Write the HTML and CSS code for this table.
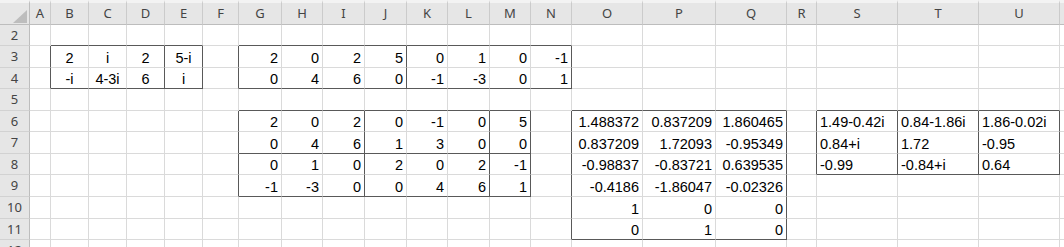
FILE: index.html
```html
<!DOCTYPE html>
<html>
<head>
<meta charset="utf-8">
<link rel="stylesheet" href="styles.css">
</head>
<body>
<div class="sheet">
  <!-- header row -->
  <div class="corner"><svg class="tri" width="14" height="13" viewBox="0 0 14 13"><polygon points="14,0 14,13 0,13" fill="#bdbdbd"/></svg></div>
  <div class="h">A</div><div class="h">B</div><div class="h">C</div><div class="h">D</div><div class="h">E</div><div class="h">F</div><div class="h">G</div><div class="h">H</div><div class="h">I</div><div class="h">J</div><div class="h">K</div><div class="h">L</div><div class="h">M</div><div class="h">N</div><div class="h">O</div><div class="h">P</div><div class="h">Q</div><div class="h">R</div><div class="h">S</div><div class="h">T</div><div class="h">U</div><div class="h"></div>

  <!-- row 2 -->
  <div class="rh">2</div>
  <div></div><div class="B"></div><div class="B"></div><div class="B"></div><div class="B"></div><div></div>
  <div class="B"></div><div class="B"></div><div class="B"></div><div class="B"></div><div class="B"></div><div class="B"></div><div class="B"></div><div class="B"></div>
  <div></div><div></div><div></div><div></div><div></div><div></div><div></div><div></div>

  <!-- row 3 -->
  <div class="rh">3</div>
  <div class="R"></div><div class="c">2</div><div class="c">i</div><div class="c R">2</div><div class="c R">5-i</div><div class="R"></div>
  <div class="r">2</div><div class="r">0</div><div class="r">2</div><div class="r R">5</div><div class="r">0</div><div class="r">1</div><div class="r">0</div><div class="r R">-1</div>
  <div></div><div></div><div></div><div></div><div></div><div></div><div></div><div></div>

  <!-- row 4 -->
  <div class="rh">4</div>
  <div class="R"></div><div class="c B">-i</div><div class="c B">4-3i</div><div class="c R B">6</div><div class="c R B">i</div><div class="R"></div>
  <div class="r B">0</div><div class="r B">4</div><div class="r B">6</div><div class="r R B">0</div><div class="r B">-1</div><div class="r B">-3</div><div class="r B">0</div><div class="r R B">1</div>
  <div></div><div></div><div></div><div></div><div></div><div></div><div></div><div></div>

  <!-- row 5 -->
  <div class="rh">5</div>
  <div></div><div></div><div></div><div></div><div></div><div></div>
  <div class="B"></div><div class="B"></div><div class="B"></div><div class="B"></div><div class="B"></div><div class="B"></div><div class="B"></div><div></div>
  <div class="B"></div><div class="B"></div><div class="B"></div><div></div><div class="B"></div><div class="B"></div><div class="B"></div><div></div>

  <!-- row 6 -->
  <div class="rh">6</div>
  <div></div><div></div><div></div><div></div><div></div><div class="R"></div>
  <div class="r">2</div><div class="r">0</div><div class="r R">2</div><div class="r">0</div><div class="r">-1</div><div class="r R">0</div><div class="r R">5</div><div class="R"></div>
  <div class="r">1.488372</div><div class="r">0.837209</div><div class="r R">1.860465</div><div class="R"></div><div class="l R">1.49-0.42i</div><div class="l R">0.84-1.86i</div><div class="l R">1.86-0.02i</div><div></div>

  <!-- row 7 -->
  <div class="rh">7</div>
  <div></div><div></div><div></div><div></div><div></div><div class="R"></div>
  <div class="r B">0</div><div class="r B">4</div><div class="r R B">6</div><div class="r B">1</div><div class="r B">3</div><div class="r R B">0</div><div class="r R B">0</div><div class="R"></div>
  <div class="r">0.837209</div><div class="r">1.72093</div><div class="r R">-0.95349</div><div class="R"></div><div class="l R">0.84+i</div><div class="l R">1.72</div><div class="l R">-0.95</div><div></div>

  <!-- row 8 -->
  <div class="rh">8</div>
  <div></div><div></div><div></div><div></div><div></div><div class="R"></div>
  <div class="r">0</div><div class="r">1</div><div class="r R">0</div><div class="r">2</div><div class="r">0</div><div class="r R">2</div><div class="r R">-1</div><div class="R"></div>
  <div class="r">-0.98837</div><div class="r">-0.83721</div><div class="r R">0.639535</div><div class="R"></div><div class="l R B">-0.99</div><div class="l R B">-0.84+i</div><div class="l R B">0.64</div><div></div>

  <!-- row 9 -->
  <div class="rh">9</div>
  <div></div><div></div><div></div><div></div><div></div><div class="R"></div>
  <div class="r B">-1</div><div class="r B">-3</div><div class="r R B">0</div><div class="r B">0</div><div class="r B">4</div><div class="r R B">6</div><div class="r R B">1</div><div class="R"></div>
  <div class="r">-0.4186</div><div class="r">-1.86047</div><div class="r R">-0.02326</div><div></div><div></div><div></div><div></div><div></div>

  <!-- row 10 -->
  <div class="rh">10</div>
  <div></div><div></div><div></div><div></div><div></div><div></div>
  <div></div><div></div><div></div><div></div><div></div><div></div><div></div><div class="R"></div>
  <div class="r">1</div><div class="r">0</div><div class="r R">0</div><div></div><div></div><div></div><div></div><div></div>

  <!-- row 11 -->
  <div class="rh">11</div>
  <div></div><div></div><div></div><div></div><div></div><div></div>
  <div></div><div></div><div></div><div></div><div></div><div></div><div></div><div class="R"></div>
  <div class="r B">0</div><div class="r B">1</div><div class="r R B">0</div><div></div><div></div><div></div><div></div><div></div>

  <!-- row 12 -->
  <div class="rh">12</div>
  <div></div><div></div><div></div><div></div><div></div><div></div>
  <div></div><div></div><div></div><div></div><div></div><div></div><div></div><div></div>
  <div></div><div></div><div></div><div></div><div></div><div></div><div></div><div></div>
</div>
</body>
</html>
```

FILE: styles.css
```css
html, body {
  margin: 0;
  padding: 0;
  background: #ffffff;
  overflow: hidden;
}

.sheet {
  display: grid;
  grid-template-columns: 30px 21px 38px 38px 38px 38px 36px 43px 41px 42px 42px 41px 42px 41px 41px 71px 73px 71px 30px 81px 81px 81px 20px;
  grid-template-rows: 25px 21px 22px 21px 22px 21px 22px 21px 22px 22px 21px 21px;
  font-family: "Liberation Sans", Arial, sans-serif;
  font-size: 14.5px;
  color: #000;
  width: 1084px;
}

.sheet > div {
  box-sizing: border-box;
  border-right: 1px solid #dadada;
  border-bottom: 1px solid #dadada;
  display: flex;
  align-items: flex-end;
  padding: 0 3px 2px 3px;
  white-space: nowrap;
  overflow: hidden;
  line-height: 1;
}

.sheet > .c { justify-content: center; padding-left: 0; padding-right: 0; }
.sheet > .r { justify-content: flex-end; padding-right: 3px; }
.sheet > .l { justify-content: flex-start; padding-left: 3px; }

.sheet > .R { border-right-color: #595959; }
.sheet > .B { border-bottom-color: #595959; }

.sheet > .corner {
  background: #e6e6e6;
  border-top: 3px solid #f3f3f3;
  border-right: 1px solid #bdbdbd;
  border-bottom: 1px solid #bdbdbd;
  padding: 0 2px 1px 0;
  justify-content: flex-end;
  align-items: flex-end;
}

.tri { display: block; }

.sheet > .h {
  background: #e6e6e6;
  border-top: 3px solid #f3f3f3;
  border-right: 1px solid #cbcbcb;
  border-bottom: 1px solid #bdbdbd;
  justify-content: center;
  align-items: center;
  padding: 0;
  font-family: "Noto Sans", "Open Sans", sans-serif;
  font-size: 13px;
  color: #444;
}

.sheet > .rh {
  background: #e6e6e6;
  border-right: 1px solid #bdbdbd;
  border-bottom: 1px solid #d2d2d2;
  justify-content: center;
  align-items: center;
  padding: 0;
  font-family: "Noto Sans", "Open Sans", sans-serif;
  font-size: 13px;
  color: #444;
}
```
